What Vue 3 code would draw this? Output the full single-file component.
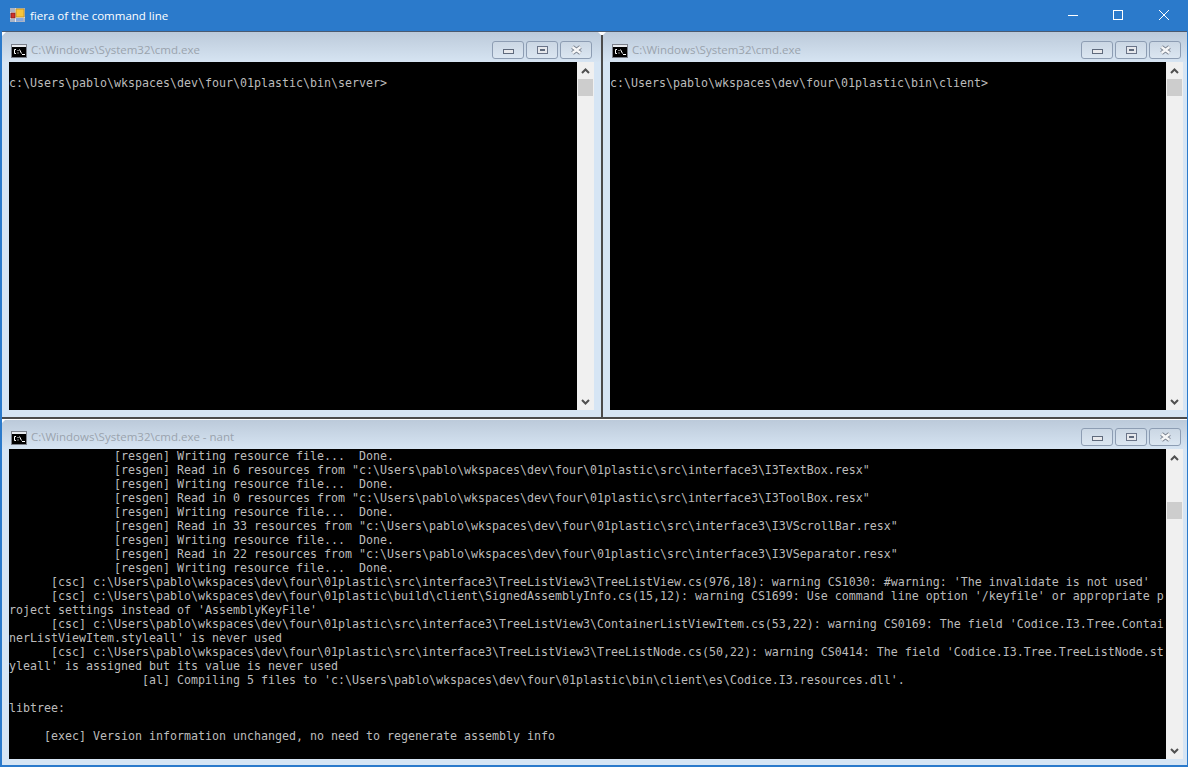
<script setup>
const bottomLines = [
  '               [resgen] Writing resource file...  Done.',
  '               [resgen] Read in 6 resources from "c:\\Users\\pablo\\wkspaces\\dev\\four\\01plastic\\src\\interface3\\I3TextBox.resx"',
  '               [resgen] Writing resource file...  Done.',
  '               [resgen] Read in 0 resources from "c:\\Users\\pablo\\wkspaces\\dev\\four\\01plastic\\src\\interface3\\I3ToolBox.resx"',
  '               [resgen] Writing resource file...  Done.',
  '               [resgen] Read in 33 resources from "c:\\Users\\pablo\\wkspaces\\dev\\four\\01plastic\\src\\interface3\\I3VScrollBar.resx"',
  '               [resgen] Writing resource file...  Done.',
  '               [resgen] Read in 22 resources from "c:\\Users\\pablo\\wkspaces\\dev\\four\\01plastic\\src\\interface3\\I3VSeparator.resx"',
  '               [resgen] Writing resource file...  Done.',
  "      [csc] c:\\Users\\pablo\\wkspaces\\dev\\four\\01plastic\\src\\interface3\\TreeListView3\\TreeListView.cs(976,18): warning CS1030: #warning: 'The invalidate is not used'",
  "      [csc] c:\\Users\\pablo\\wkspaces\\dev\\four\\01plastic\\build\\client\\SignedAssemblyInfo.cs(15,12): warning CS1699: Use command line option '/keyfile' or appropriate p",
  "roject settings instead of 'AssemblyKeyFile'",
  "      [csc] c:\\Users\\pablo\\wkspaces\\dev\\four\\01plastic\\src\\interface3\\TreeListView3\\ContainerListViewItem.cs(53,22): warning CS0169: The field 'Codice.I3.Tree.Contai",
  "nerListViewItem.styleall' is never used",
  "      [csc] c:\\Users\\pablo\\wkspaces\\dev\\four\\01plastic\\src\\interface3\\TreeListView3\\TreeListNode.cs(50,22): warning CS0414: The field 'Codice.I3.Tree.TreeListNode.st",
  "yleall' is assigned but its value is never used",
  "                   [al] Compiling 5 files to 'c:\\Users\\pablo\\wkspaces\\dev\\four\\01plastic\\bin\\client\\es\\Codice.I3.resources.dll'.",
  '',
  'libtree:',
  '',
  '     [exec] Version information unchanged, no need to regenerate assembly info',
]
const panes = [
  { id: 'left', title: 'C:\\Windows\\System32\\cmd.exe', lines: ['', 'c:\\Users\\pablo\\wkspaces\\dev\\four\\01plastic\\bin\\server>'] },
  { id: 'right', title: 'C:\\Windows\\System32\\cmd.exe', lines: ['', 'c:\\Users\\pablo\\wkspaces\\dev\\four\\01plastic\\bin\\client>'] },
  { id: 'bottom', title: 'C:\\Windows\\System32\\cmd.exe - nant', lines: bottomLines },
]
</script>

<template>
  <div class="app">
    <header class="titlebar">
      <svg class="appicon" width="15" height="14" viewBox="0 0 15 14">
        <rect x="0" y="0" width="15" height="14" fill="#aab4c6" />
        <path d="M5.500 0V14M0 4.500H5M0 10.500H5M6 9.500H15" stroke="#e4e8ef" />
        <rect x="6" y="1" width="8" height="8" fill="#f7c53c" stroke="#c08f1f" stroke-width="0.8" />
        <rect x="1" y="5" width="4" height="5" fill="#d0302a" stroke="#7c1b18" stroke-width="0.7" />
        <rect x="6" y="10" width="7" height="3" fill="#86a8de" />
      </svg>
      <span class="apptitle">fiera of the command line</span>
      <div class="winbtns">
        <span class="wb"><svg width="12" height="12" viewBox="0 0 12 12"><path d="M2 6.500H12" stroke="#fff" /></svg></span>
        <span class="wb"><svg width="12" height="12" viewBox="0 0 12 12"><rect x="1.500" y="1.500" width="9" height="9" fill="none" stroke="#fff" /></svg></span>
        <span class="wb"><svg width="12" height="12" viewBox="0 0 12 12"><path d="M1 1L11 11M11 1L1 11" stroke="#fff" /></svg></span>
      </div>
    </header>
    <main class="split">
      <section v-for="p in panes" :key="p.id" class="pane" :class="p.id">
        <div class="capt">
          <svg class="cmdicon" width="16" height="14" viewBox="0 0 16 14">
            <rect x="0" y="0" width="16" height="14" fill="#7b808a" />
            <rect x="1" y="1" width="14" height="2" fill="#e6e9ee" />
            <rect x="1" y="3" width="14" height="10" fill="#000" />
            <path d="M5 5.500H3.500V9.500H5M7 6V7M7 8.500V9.500M8.500 5.500L10.500 9.500M11 10.500H14" stroke="#fff" fill="none" />
          </svg>
          <span class="capt-text">{{ p.title }}</span>
          <div class="cbtns">
            <span class="cb"><i class="g-min"></i></span>
            <span class="cb">
              <svg class="g-max" width="11" height="8" viewBox="0 0 11 8"><rect x="0.500" y="0.500" width="10" height="7" fill="#e6e8ec" stroke="#6a7488" /><rect x="3" y="3" width="5" height="2" fill="#5f6a7c" /></svg>
            </span>
            <span class="cb">
              <svg class="g-close" width="13" height="10" viewBox="0 0 13 10"><path d="M2.500 2L10.500 8M10.500 2L2.500 8" stroke="#7b8390" stroke-width="4.200" /><path d="M2.500 2L10.500 8M10.500 2L2.500 8" stroke="#f6f7f8" stroke-width="2.400" /></svg>
            </span>
          </div>
        </div>
        <div class="client">
          <pre class="console">{{ p.lines.join('\n') }}</pre>
          <div class="sb">
            <svg class="arrow" width="9" height="6" viewBox="0 0 9 6"><path d="M1 5L4.500 1.500L8 5" fill="none" stroke="#505050" stroke-width="2" /></svg>
            <div class="thumb"></div>
            <svg class="arrow down" width="9" height="6" viewBox="0 0 9 6"><path d="M1 1L4.500 4.500L8 1" fill="none" stroke="#505050" stroke-width="2" /></svg>
          </div>
        </div>
      </section>
      <svg class="notch n1" width="4" height="4" viewBox="0 0 4 4"><path d="M0 0H4L0 4Z" fill="#fff" /></svg>
      <svg class="notch n2" width="4" height="4" viewBox="0 0 4 4"><path d="M0 0H4L0 4Z" fill="#fff" /></svg>
      <svg class="notch n3" width="8" height="4" viewBox="0 0 8 4"><path d="M0 0H8L5 3H3Z" fill="#fff" /></svg>
    </main>
  </div>
</template>

<style scoped>
.app {
  width: 1188px;
  height: 767px;
  box-sizing: border-box;
  background: #2b7acb;
  padding: 0 1px 2px 2px;
  display: flex;
  flex-direction: column;
  overflow: hidden;
}
.titlebar {
  height: 31px;
  flex: none;
  display: flex;
  align-items: center;
  margin-left: -2px;
  padding-left: 10px;
  color: #fff;
}
.appicon { margin-right: 5px; margin-top: -1px; }
.apptitle { font: 11.5px/16px "Open Sans", "Liberation Sans", sans-serif; }
.winbtns { margin-left: auto; display: flex; align-self: flex-start; }
.wb { width: 46px; height: 30px; display: flex; align-items: center; justify-content: center; }
.split {
  flex: 1;
  position: relative;
  display: grid;
  grid-template-columns: 599px 584px;
  grid-template-rows: 385px 346px;
  column-gap: 2px;
  row-gap: 2px;
  background: #4b4b4b;
  border-top: 1px solid #4a5a70;
}
.pane {
  display: flex;
  flex-direction: column;
  background: #d6e5f4;
  min-width: 0;
  min-height: 0;
}
.pane.bottom { grid-column: 1 / 3; border-top: 1px solid #fff; }
.capt {
  height: 30px;
  flex: none;
  box-sizing: border-box;
  display: flex;
  align-items: flex-end;
  padding: 0 9px 3px 9px;
  background: linear-gradient(#bccada, #d6e4f2);
}
.bottom .capt { height: 29px; }
.right .capt, .bottom .capt { padding-right: 6px; }
.cmdicon { margin: 0 4px 1px 0; }
.capt-text {
  color: #9aa3ad;
  margin-bottom: 1px;
  font: 11.5px/16px "Open Sans", "Liberation Sans", sans-serif;
}
.cbtns { margin-left: auto; display: flex; gap: 2px; }
.cb {
  width: 32px;
  height: 18px;
  box-sizing: border-box;
  border: 1px solid #8d9db3;
  border-radius: 3px;
  background: linear-gradient(#cbd7e4, #dbe6f1);
  display: flex;
  align-items: center;
  justify-content: center;
}
.g-min {
  width: 11px;
  height: 5px;
  margin-top: 3px;
  box-sizing: border-box;
  border: 1px solid #5f6a7c;
  background: #e8e9ec;
}
.g-max, .g-close { margin-top: -1px; }
.client {
  flex: 1;
  display: flex;
  min-height: 0;
  margin: 0 7px 7px 7px;
}
.right .client { margin-right: 4px; }
.bottom .client { margin-right: 4px; margin-bottom: 6px; }
.console {
  flex: 1;
  min-width: 0;
  margin: 0;
  background: #000;
  color: #bcbcbc;
  font: 11.63px/14px "DejaVu Sans Mono", "Liberation Mono", monospace;
  white-space: pre;
  overflow: hidden;
}
.sb {
  width: 17px;
  flex: none;
  background: #f0f0f0;
  display: flex;
  flex-direction: column;
  align-items: center;
}
.arrow { margin-top: 6px; flex: none; }
.arrow.down { margin-top: auto; margin-bottom: 5px; }
.thumb { width: 15px; height: 17px; margin-top: 5px; background: #cdcdcd; }
.bottom .thumb { margin-top: 41px; }
.notch { position: absolute; }
.n1 { left: 0; top: 0; }
.n2 { left: 0; top: 387px; }
.n3 { left: 596px; top: 0; }
</style>
